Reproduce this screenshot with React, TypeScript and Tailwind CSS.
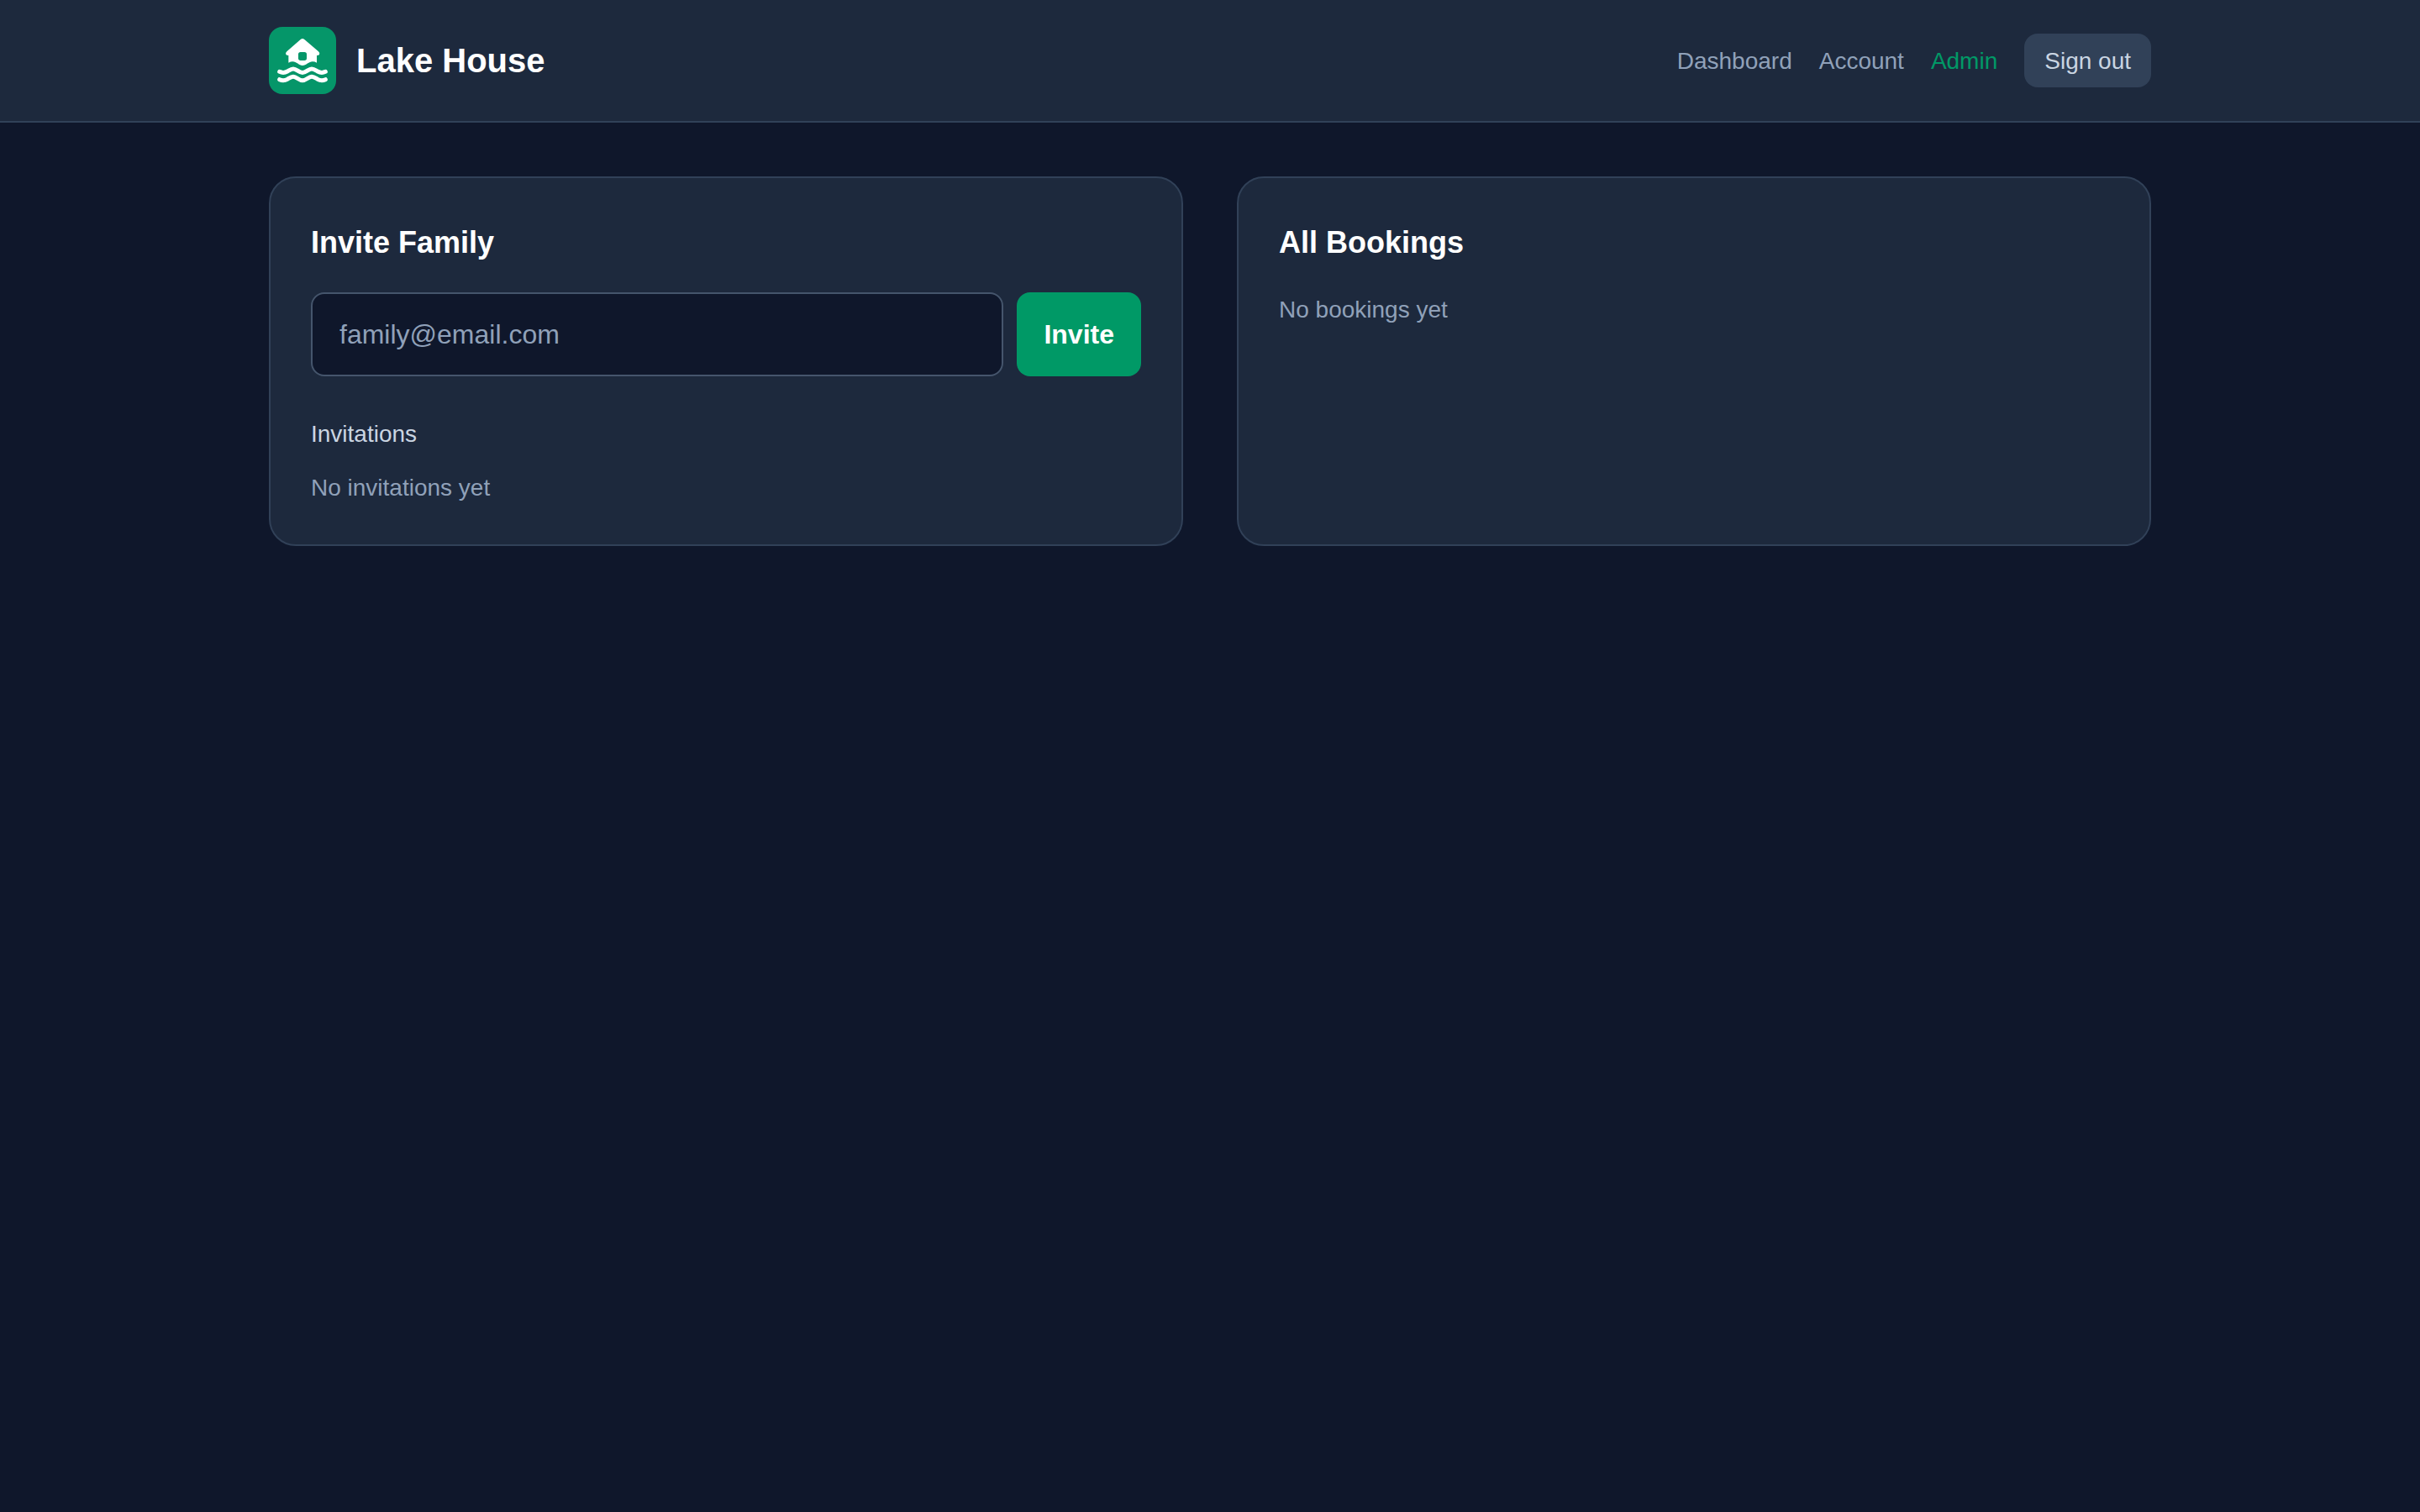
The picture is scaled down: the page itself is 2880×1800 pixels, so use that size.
import type { ReactNode } from 'react';

function Logo() {
  return (
    <svg viewBox="0 0 240 240" className="size-20 rounded-2xl bg-[#059669]" aria-hidden="true">
      <path
        fill="#fff"
        fillRule="evenodd"
        d="M113 45Q120 39 127 45L177 88Q183 93 180 99Q178 102 171 102V128Q164 124 156 124C143 124 133 138 120 138C108 138 98 124 85 124Q78 124 70 128V102Q64 102 61 99Q58 93 64 88ZM113 90Q105 90 105 98V112Q105 120 113 120H127Q135 120 135 112V98Q135 90 127 90Z"
      />
      <g fill="none" stroke="#fff" strokeWidth="15" strokeLinecap="round" strokeLinejoin="round">
        <path d="M38 160Q52 167 66 159C73 155 79 150 87 150C99 150 107 163.500 120 163.500C133 163.500 141 150 153 150C161 150 167 155 174 159Q188 167 202 160" />
        <path d="M38 188Q52 195 66 187C73 183 79 178 87 178C99 178 107 191.500 120 191.500C133 191.500 141 178 153 178C161 178 167 183 174 187Q188 195 202 188" />
      </g>
    </svg>
  );
}

function Header() {
  return (
    <header className="border-b-2 border-slate-700 bg-slate-800">
      <div className="mx-auto flex w-[2240px] items-center justify-between py-8">
        <div className="flex items-center gap-6">
          <Logo />
          <h1 className="text-[40px] leading-[56px] font-bold text-white">Lake House</h1>
        </div>
        <nav className="flex items-center gap-8 text-[28px] leading-[39px] text-slate-400">
          <a href="#dashboard" className="pt-px">Dashboard</a>
          <a href="#account" className="pt-px">Account</a>
          <a href="#admin" className="pt-px text-emerald-600">Admin</a>
          <button type="button" className="rounded-2xl bg-slate-700 px-6 pt-[13px] pb-3 text-slate-300">
            Sign out
          </button>
        </nav>
      </div>
    </header>
  );
}

function Card({ title, children }: { title: string; children: ReactNode }) {
  return (
    <section className="rounded-[32px] border-2 border-slate-700 bg-slate-800 p-12">
      <h2 className="mb-8 pt-px text-[36px] leading-[55px] font-bold text-white">{title}</h2>
      {children}
    </section>
  );
}

export default function App() {
  return (
    <div className="min-h-screen bg-slate-900 font-['Liberation_Sans',Arial,sans-serif]">
      <Header />
      <main className="mx-auto grid w-[2240px] grid-cols-2 gap-16 py-16">
        <Card title="Invite Family">
          <form className="flex gap-4">
            <input
              type="email"
              placeholder="family@email.com"
              className="min-w-0 flex-1 rounded-2xl border-2 border-slate-600 bg-slate-900 px-8 py-6 text-[32px] leading-[48px] text-white placeholder:text-slate-400"
            />
            <button
              type="button"
              className="rounded-2xl bg-emerald-600 px-8 text-[32px] leading-[48px] font-bold text-white"
            >
              Invite
            </button>
          </form>
          <div className="mt-12 text-[28px] leading-[39px]">
            <h3 className="mb-6 pt-px text-slate-300">Invitations</h3>
            <p className="pt-px text-slate-400">No invitations yet</p>
          </div>
        </Card>
        <Card title="All Bookings">
          <p className="pt-px text-[28px] leading-[39px] text-slate-400">No bookings yet</p>
        </Card>
      </main>
    </div>
  );
}
